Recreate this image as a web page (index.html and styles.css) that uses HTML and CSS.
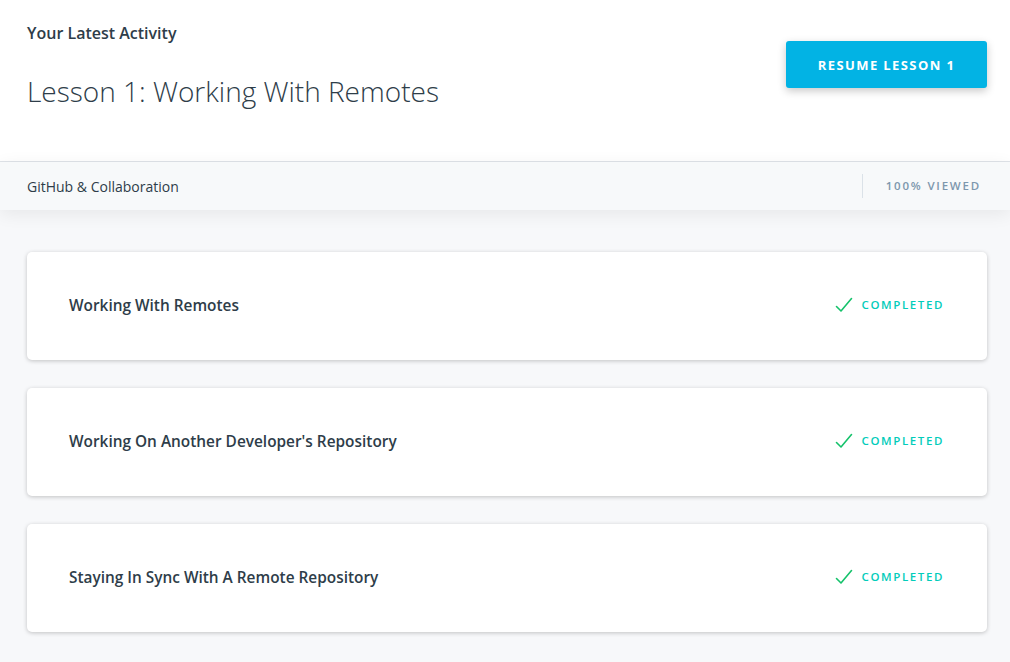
FILE: index.html
```html
<!DOCTYPE html>
<html>
<head>
<meta charset="utf-8">
<link rel="stylesheet" href="styles.css">
</head>
<body>
<header class="top">
  <div class="top-left">
    <h3 class="eyebrow">Your Latest Activity</h3>
    <h1 class="title">Lesson 1: Working With Remotes</h1>
  </div>
  <button class="resume">RESUME LESSON 1</button>
</header>
<div class="subbar">
  <span class="course">GitHub &amp; Collaboration</span>
  <span class="viewed">100% VIEWED</span>
</div>
<main class="list">
  <div class="card">
    <span class="card-title">Working With Remotes</span>
    <span class="status"><svg class="check" width="18" height="16" viewBox="0 0 18 16"><path d="M1.5 9.5 L6 14 L16.5 1.5" fill="none" stroke="#15c26b" stroke-width="1.6" stroke-linecap="round" stroke-linejoin="round"/></svg>COMPLETED</span>
  </div>
  <div class="card">
    <span class="card-title">Working On Another Developer's Repository</span>
    <span class="status"><svg class="check" width="18" height="16" viewBox="0 0 18 16"><path d="M1.5 9.5 L6 14 L16.5 1.5" fill="none" stroke="#15c26b" stroke-width="1.6" stroke-linecap="round" stroke-linejoin="round"/></svg>COMPLETED</span>
  </div>
  <div class="card">
    <span class="card-title">Staying In Sync With A Remote Repository</span>
    <span class="status"><svg class="check" width="18" height="16" viewBox="0 0 18 16"><path d="M1.5 9.5 L6 14 L16.5 1.5" fill="none" stroke="#15c26b" stroke-width="1.6" stroke-linecap="round" stroke-linejoin="round"/></svg>COMPLETED</span>
  </div>
</main>
</body>
</html>
```
FILE: styles.css
```css
* { box-sizing: border-box; }
html, body { margin: 0; padding: 0; }
body {
  font-family: "Open Sans", "Liberation Sans", sans-serif;
  color: #2e3d49;
  background: #f7f8fa;
  width: 1010px;
  height: 662px;
  overflow: hidden;
}
.top {
  background: #fff;
  height: 162px;
  border-bottom: 1px solid #dfe3e8;
  display: flex;
  justify-content: space-between;
  align-items: flex-start;
  padding: 0 23px 0 27px;
}
.eyebrow {
  margin: 23px 0 0;
  font-size: 16px;
  line-height: 20px;
  font-weight: 600;
  color: #2e3d49;
}
.title {
  margin: 30px 0 0;
  font-size: 28px;
  line-height: 36px;
  font-weight: 300;
  color: #2e3d49;
}
.resume {
  margin-top: 41px;
  width: 201px;
  height: 47px;
  border: 0;
  border-radius: 3px;
  background: #02b3e4;
  color: #fff;
  font-family: "Open Sans", "Liberation Sans", sans-serif;
  font-size: 13px;
  font-weight: 700;
  letter-spacing: 1.4px;
  box-shadow: 0 3px 8px rgba(0,0,0,0.22);
  padding: 0;
}
.subbar {
  height: 48px;
  background: #f7f9fa;
  display: flex;
  align-items: center;
  justify-content: space-between;
  padding: 0 29px 0 27px;
  position: relative;
  z-index: 1;
  box-shadow: 0 4px 18px rgba(0,0,0,0.07);
}
.course {
  font-size: 14px;
  color: #2e3d49;
}
.viewed {
  font-size: 11.5px;
  font-weight: 600;
  letter-spacing: 1.8px;
  color: #7d97ad;
  border-left: 1px solid #dbe2e8;
  padding: 1px 0 1px 23px;
  line-height: 22px;
}
.list {
  padding: 42px 23px 0 27px;
  display: flex;
  flex-direction: column;
  gap: 28px;
}
.card {
  background: #fff;
  height: 108px;
  border-radius: 5px;
  box-shadow: 0 1px 4px rgba(0,0,0,0.22);
  display: flex;
  align-items: center;
  justify-content: space-between;
  padding: 0 43px 0 42px;
}
.card-title {
  font-size: 15.4px;
  font-weight: 600;
  color: #2e3d49;
  margin-top: -2px;
}
.status {
  display: flex;
  align-items: center;
  font-size: 11.5px;
  font-weight: 600;
  letter-spacing: 1.6px;
  color: #02ccba;
  margin-top: -4px;
}
.check {
  margin-right: 9px;
  margin-top: 2px;
}
```
